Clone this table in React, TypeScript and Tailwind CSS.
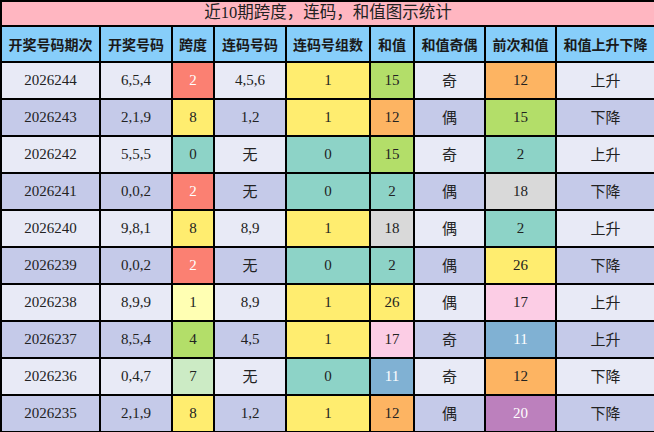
import React from "react";

type Cell = { v: string; c?: string; w?: boolean };

const R = "bg-[#fb8072]";
const Y = "bg-[#ffed6f]";
const LY = "bg-[#ffffb3]";
const T = "bg-[#8dd3c7]";
const G = "bg-[#b3de69]";
const O = "bg-[#fdb462]";
const P = "bg-[#fccde5]";
const B = "bg-[#80b1d3]";
const PU = "bg-[#bc80bd]";
const GR = "bg-[#d9d9d9]";
const LG = "bg-[#ccebc5]";

const rows: { id: string; nums: string; span: Cell; lian: string; zu: Cell; he: Cell; oe: string; prev: Cell; dir: string }[] = [
  { id: "2026244", nums: "6,5,4", span: { v: "2", c: R, w: true }, lian: "4,5,6", zu: { v: "1", c: Y }, he: { v: "15", c: G }, oe: "奇", prev: { v: "12", c: O }, dir: "上升" },
  { id: "2026243", nums: "2,1,9", span: { v: "8", c: Y }, lian: "1,2", zu: { v: "1", c: Y }, he: { v: "12", c: O }, oe: "偶", prev: { v: "15", c: G }, dir: "下降" },
  { id: "2026242", nums: "5,5,5", span: { v: "0", c: T }, lian: "无", zu: { v: "0", c: T }, he: { v: "15", c: G }, oe: "奇", prev: { v: "2", c: T }, dir: "上升" },
  { id: "2026241", nums: "0,0,2", span: { v: "2", c: R, w: true }, lian: "无", zu: { v: "0", c: T }, he: { v: "2", c: T }, oe: "偶", prev: { v: "18", c: GR }, dir: "下降" },
  { id: "2026240", nums: "9,8,1", span: { v: "8", c: Y }, lian: "8,9", zu: { v: "1", c: Y }, he: { v: "18", c: GR }, oe: "偶", prev: { v: "2", c: T }, dir: "上升" },
  { id: "2026239", nums: "0,0,2", span: { v: "2", c: R, w: true }, lian: "无", zu: { v: "0", c: T }, he: { v: "2", c: T }, oe: "偶", prev: { v: "26", c: Y }, dir: "下降" },
  { id: "2026238", nums: "8,9,9", span: { v: "1", c: LY }, lian: "8,9", zu: { v: "1", c: Y }, he: { v: "26", c: Y }, oe: "偶", prev: { v: "17", c: P }, dir: "上升" },
  { id: "2026237", nums: "8,5,4", span: { v: "4", c: G }, lian: "4,5", zu: { v: "1", c: Y }, he: { v: "17", c: P }, oe: "奇", prev: { v: "11", c: B, w: true }, dir: "上升" },
  { id: "2026236", nums: "0,4,7", span: { v: "7", c: LG }, lian: "无", zu: { v: "0", c: T }, he: { v: "11", c: B, w: true }, oe: "奇", prev: { v: "12", c: O }, dir: "下降" },
  { id: "2026235", nums: "2,1,9", span: { v: "8", c: Y }, lian: "1,2", zu: { v: "1", c: Y }, he: { v: "12", c: O }, oe: "偶", prev: { v: "20", c: PU, w: true }, dir: "下降" },
];

const headers = ["开奖号码期次", "开奖号码", "跨度", "连码号码", "连码号组数", "和值", "和值奇偶", "前次和值", "和值上升下降"];
const widths = ["w-[99px]", "w-[72px]", "w-[42px]", "w-[72px]", "w-[84px]", "w-[44px]", "w-[71px]", "w-[71px]", "w-[99px]"];

const serif = "font-['Liberation_Serif','Noto_Sans_CJK_SC',serif] text-[15px]";
const cjk = "font-['Noto_Sans_CJK_SC',sans-serif] text-[15px]";

function Td({ cell, bg }: { cell: Cell | string; bg: string }) {
  const c: Cell = typeof cell === "string" ? { v: cell } : cell;
  const isCjk = /[\u4e00-\u9fff]/.test(c.v);
  return (
    <td
      className={`border-2 border-black text-center p-0 ${c.c ?? bg} ${c.w ? "text-white" : "text-[#222]"} ${isCjk ? cjk : serif}`}
    >
      {c.v}
    </td>
  );
}

export default function App() {
  return (
    <div className="w-[654px] h-[432px] overflow-hidden bg-white">
      <table className="border-collapse table-fixed w-[654px]">
        <colgroup>
          {widths.map((w, i) => (
            <col key={i} className={w} />
          ))}
        </colgroup>
        <tbody>
          <tr className="h-[25px]">
            <td
              colSpan={9}
              className="border-2 border-black bg-[#ffb6c1] text-center p-0 text-[16.5px] text-[#222] font-['Liberation_Serif','Noto_Sans_CJK_SC',serif] leading-none"
            >
              近10期跨度，连码，和值图示统计
            </td>
          </tr>
          <tr className="h-[36px]">
            {headers.map((h) => (
              <td
                key={h}
                className="border-2 border-black bg-[#87cefa] text-center p-0 text-[14px] font-bold text-[#1a1a1a] font-['Noto_Sans_CJK_SC',sans-serif] whitespace-nowrap"
              >
                {h}
              </td>
            ))}
          </tr>
          {rows.map((r, i) => {
            const bg = i % 2 === 0 ? "bg-[#e8eaf6]" : "bg-[#c5cae9]";
            return (
              <tr key={r.id} className="h-[37px]">
                <Td cell={r.id} bg={bg} />
                <Td cell={r.nums} bg={bg} />
                <Td cell={r.span} bg={bg} />
                <Td cell={r.lian} bg={bg} />
                <Td cell={r.zu} bg={bg} />
                <Td cell={r.he} bg={bg} />
                <Td cell={r.oe} bg={bg} />
                <Td cell={r.prev} bg={bg} />
                <Td cell={r.dir} bg={bg} />
              </tr>
            );
          })}
        </tbody>
      </table>
    </div>
  );
}
